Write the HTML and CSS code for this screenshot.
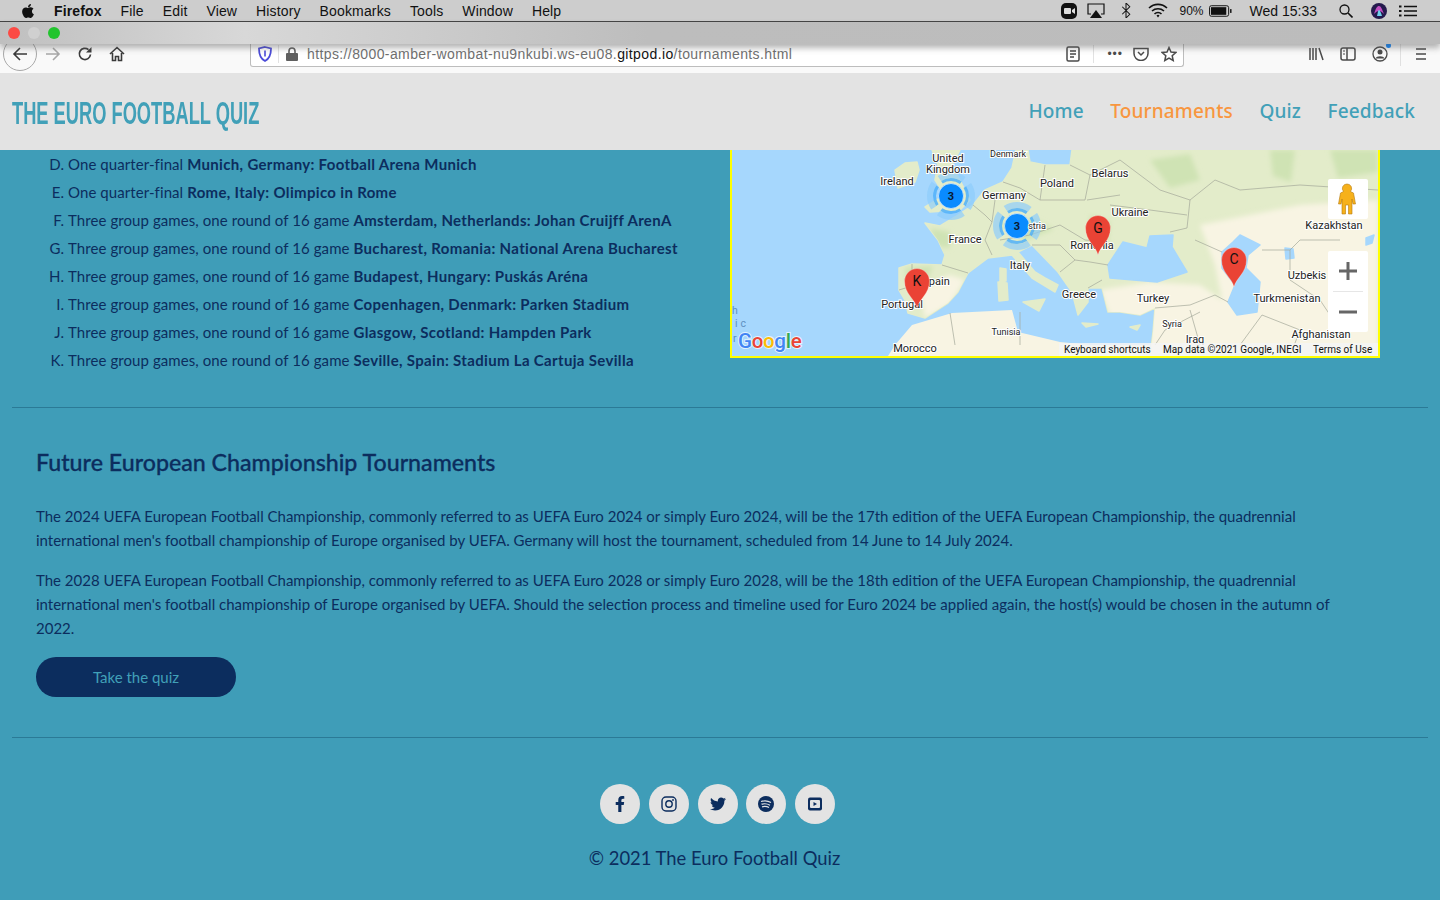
FILE: index.html
```html
<!DOCTYPE html>
<html lang="en">

<head>
    <meta charset="UTF-8" />
    <meta name="viewport" content="width=device-width, initial-scale=1.0" />
    <title>Tournaments - The Euro Football Quiz</title>
    <link rel="stylesheet" href="styles.css">
</head>

<body>
    <!-- mac menu bar -->
    <div class="menubar">
        <svg class="apple" viewBox="0 0 384 512"><path d="M318.7 268.7c-.2-36.7 16.4-64.4 50-84.8-18.8-26.9-47.2-41.7-84.7-44.6-35.5-2.8-74.3 20.7-88.5 20.7-15 0-49.4-19.7-76.4-19.7C63.3 141.2 4 184.8 4 273.5q0 39.3 14.4 81.2c12.8 36.7 59 126.7 107.2 125.2 25.2-.6 43-17.9 75.8-17.9 31.8 0 48.3 17.9 76.4 17.9 48.6-.7 90.4-82.5 102.6-119.3-65.2-30.7-61.7-90-61.7-91.9zm-56.6-164.2c27.3-32.4 24.8-61.9 24-72.5-24.1 1.4-52 16.4-67.9 34.9-17.5 19.8-27.8 44.3-25.6 71.9 26.1 2 49.9-11.4 69.5-34.3z"/></svg>
        <b class="app-name">Firefox</b>
        <span>File</span>
        <span>Edit</span>
        <span>View</span>
        <span>History</span>
        <span>Bookmarks</span>
        <span>Tools</span>
        <span>Window</span>
        <span>Help</span>
        <div class="menubar-right">
            <svg class="tray tray-zoom" viewBox="0 0 16 16"><rect width="16" height="16" rx="5" fill="#111"/><rect x="3" y="5" width="7" height="6" rx="1" fill="#ddd"/><path d="M11 7l3-2v6l-3-2z" fill="#ddd"/></svg>
            <svg class="tray tray-air" viewBox="0 0 18 16"><path d="M4 11H1V1h16v10h-3" fill="none" stroke="#111" stroke-width="1.2"/><path d="M9 7l6 8H3z" fill="#111"/></svg>
            <svg class="tray tray-bt" viewBox="0 0 10 16"><path d="M1 4l8 8-4 4V0l4 4-8 8" fill="none" stroke="#111" stroke-width="1.1"/></svg>
            <svg class="tray tray-wifi" viewBox="0 0 20 15"><path d="M1 5a13 13 0 0 1 18 0M4 8a9 9 0 0 1 12 0M6.5 11a5 5 0 0 1 7 0" fill="none" stroke="#111" stroke-width="1.6"/><path d="M8.5 12.500a2.200 2.200 0 0 1 3 0L10 14.500z" fill="#111"/></svg>
            <span class="tray-pct">90%</span>
            <svg class="tray tray-batt" viewBox="0 0 24 12"><rect x=".5" y=".5" width="20" height="11" rx="2" fill="none" stroke="#111"/><rect x="2" y="2" width="16" height="8" fill="#111"/><rect x="22" y="4" width="1.500" height="4" fill="#111"/></svg>
            <span class="tray-time">Wed 15:33</span>
            <svg class="tray tray-search" viewBox="0 0 14 14"><circle cx="5.500" cy="5.500" r="4.500" fill="none" stroke="#111" stroke-width="1.3"/><path d="M9 9l4.500 4.500" stroke="#111" stroke-width="1.600"/></svg>
            <svg class="tray tray-siri" viewBox="0 0 16 16"><circle cx="8" cy="8" r="8" fill="#241a4d"/><path d="M3 11c2-6 3-8 5-8s3 3 5 8c-2-2-3-3-5-3s-3 1-5 3z" fill="#c04fc0"/><path d="M6 13c1-4 1-6 2-6s2 3 3 6z" fill="#6fd0ee"/></svg>
            <svg class="tray tray-list" viewBox="0 0 18 12"><path d="M5 1.500h13M5 6h13M5 10.500h13" stroke="#111" stroke-width="1.400"/><path d="M0 1.500h2.500M0 6h2.500M0 10.500h2.500" stroke="#111" stroke-width="1.800"/></svg>
        </div>
    </div>

    <!-- window title bar -->
    <div class="titlebar">
        <span class="light light-red"></span>
        <span class="light light-off"></span>
        <span class="light light-green"></span>
    </div>

    <!-- firefox toolbar -->
    <div class="toolbar">
        <div class="nav-buttons">
            <span class="back-circle">
                <svg viewBox="0 0 16 16"><path d="M15 8H2M8 2L2 8l6 6" fill="none" stroke="#3a3a3a" stroke-width="1.600"/></svg>
            </span>
            <svg class="tool-icon forward" viewBox="0 0 16 16"><path d="M1 8h13M8 2l6 6-6 6" fill="none" stroke="#a8a8a8" stroke-width="1.600"/></svg>
            <svg class="tool-icon reload" viewBox="0 0 16 16"><path d="M13.500 8.500A5.600 5.600 0 1 1 11.500 3.600" fill="none" stroke="#3a3a3a" stroke-width="1.700"/><path d="M14.500 1v5.500H9z" fill="#3a3a3a"/></svg>
            <svg class="tool-icon home" viewBox="0 0 16 16"><path d="M1 8l7-6.500L15 8M3.500 7v7.500h3v-4h3v4h3V7" fill="none" stroke="#3a3a3a" stroke-width="1.600"/></svg>
        </div>
        <div class="urlbar">
            <svg class="shield" viewBox="0 0 14 16"><path d="M7 1l6 1.500c0 6-1 10-6 12.500C2 12.500 1 8.500 1 2.500z" fill="none" stroke="#4b4bd8" stroke-width="1.800"/><path d="M7 4.500v6" stroke="#4b4bd8" stroke-width="1.600"/></svg>
            <span class="url-sep"></span>
            <svg class="lock" viewBox="0 0 12 14"><rect x="0" y="6" width="12" height="8" rx="1" fill="#5f5f5f"/><path d="M3 6V4a3 3 0 0 1 6 0v2" fill="none" stroke="#5f5f5f" stroke-width="1.600"/></svg>
            <span class="url-text">https://8000-amber-wombat-nu9nkubi.ws-eu08.<em>gitpod.io</em>/tournaments.html</span>
            <svg class="url-icon reader" viewBox="0 0 14 16"><rect x="1" y="1" width="12" height="14" rx="1.500" fill="none" stroke="#4a4a4a" stroke-width="1.500"/><path d="M4 5h6M4 8h6M4 11h4" stroke="#4a4a4a" stroke-width="1.300"/></svg>
            <span class="url-sep url-sep-right"></span>
            <span class="url-dots">&bull;&bull;&bull;</span>
            <svg class="url-icon pocket" viewBox="0 0 16 14"><path d="M1 1.500h14v5a7 7 0 0 1-14 0z" fill="none" stroke="#4a4a4a" stroke-width="1.500"/><path d="M5 5l3 3 3-3" fill="none" stroke="#4a4a4a" stroke-width="1.500"/></svg>
            <svg class="url-icon star" viewBox="0 0 16 16"><path d="M8 1.500l2 4.500 4.800.500-3.600 3.200 1 4.800L8 12.100l-4.200 2.400 1-4.800L1.200 6.500 6 6z" fill="none" stroke="#4a4a4a" stroke-width="1.500"/></svg>
        </div>
        <div class="toolbar-right">
            <svg class="tool-icon library" viewBox="0 0 16 16"><path d="M2 2v12M5 2v12M8 2v12M11 2l4 12" fill="none" stroke="#4a4a4a" stroke-width="1.500"/></svg>
            <svg class="tool-icon sidebar" viewBox="0 0 16 16"><rect x="1" y="2" width="14" height="12" rx="2" fill="none" stroke="#4a4a4a" stroke-width="1.500"/><path d="M7 2v12" stroke="#4a4a4a" stroke-width="1.500"/><path d="M3 5h2M3 8h2" stroke="#4a4a4a"/></svg>
            <span class="account">
                <svg class="tool-icon" viewBox="0 0 16 16"><circle cx="8" cy="8" r="7" fill="none" stroke="#4a4a4a" stroke-width="1.300"/><circle cx="8" cy="6" r="2.500" fill="#4a4a4a"/><path d="M3.500 12.500c1-3 8-3 9 0z" fill="#4a4a4a"/></svg>
                <span class="account-dot"></span>
            </span>
            <span class="tool-sep"></span>
            <svg class="tool-icon menu" viewBox="0 0 16 16"><path d="M3 3h10M3 8h10M3 13h10" stroke="#4a4a4a" stroke-width="1.500"/></svg>
        </div>
    </div>

    <!-- the page itself -->
    <header class="site-header">
        <a class="logo">THE EURO FOOTBALL QUIZ</a>
        <nav class="site-nav">
            <a>Home</a>
            <a class="active">Tournaments</a>
            <a>Quiz</a>
            <a>Feedback</a>
        </nav>
    </header>

    <main class="content">
        <div class="hosts">
            <ol class="venues" start="4">
                <li>One quarter-final <b>Munich, Germany: Football Arena Munich</b></li>
                <li>One quarter-final <b>Rome, Italy: Olimpico in Rome</b></li>
                <li>Three group games, one round of 16 game <b>Amsterdam, Netherlands: Johan Cruijff ArenA</b></li>
                <li>Three group games, one round of 16 game <b>Bucharest, Romania: National Arena Bucharest</b></li>
                <li>Three group games, one round of 16 game <b>Budapest, Hungary: Puskás Aréna</b></li>
                <li>Three group games, one round of 16 game <b>Copenhagen, Denmark: Parken Stadium</b></li>
                <li>Three group games, one round of 16 game <b>Glasgow, Scotland: Hampden Park</b></li>
                <li>Three group games, one round of 16 game <b>Seville, Spain: Stadium La Cartuja Sevilla</b></li>
            </ol>

            <div class="map">
                <svg class="map-svg" viewBox="732 150 646 206">
                    <defs>
                        <filter id="soft"><feGaussianBlur stdDeviation="2.500"/></filter>
                        <clipPath id="eurasia"><path d="M899 290L899 268 912 264 942 265 945 255 938 240 925 223 940 226 955 217 973 205 985 190 1003 182 1012 168 1016 150 1028 150 1030 162 1045 165 1070 165 1072 150 1378 150 1378 356 1150 356 1153 332 1155 308 1140 315 1120 312 1108 312 1102 288 1088 288 1088 302 1078 315 1072 292 1058 272 1032 245 1018 252 1035 272 1045 278 1058 285 1055 292 1032 278 1012 255 988 258 968 273 958 292 948 303 925 318 908 313 905 300z"/></clipPath>
                    </defs>
                    <rect x="732" y="150" width="646" height="206" fill="#a6d7fd"/>
                    <!-- land -->
                    <path class="land" d="M899 290L899 268 912 264 942 265 945 255 938 240 925 223 940 226 955 217 973 205 985 190 1003 182 1012 168 1016 150 1028 150 1030 162 1045 165 1070 165 1072 150 1378 150 1378 356 1150 356 1153 332 1155 308 1140 315 1120 312 1108 312 1102 288 1088 288 1088 302 1078 315 1072 292 1058 272 1032 245 1018 252 1035 272 1045 278 1058 285 1055 292 1032 278 1012 255 988 258 968 273 958 292 948 303 925 318 908 313 905 300z"/>
                    <g clip-path="url(#eurasia)">
                        <path class="desert soft" d="M1100 290L1150 282 1200 285 1222 300 1378 290 1378 356 1150 356 1150 320 1110 316zM1200 225L1250 215 1300 205 1378 200 1378 290 1222 300 1215 265zM920 290L950 275 965 280 950 305 925 318z"/>
                        <path class="forest soft" d="M1270 150h25l-4 32-18-6zM1150 160l40-6 10 26-30 8zM1000 225l34-6 20 10-30 12zM1090 215l20 6-2 22-18-8zM930 228l20 4 0 16-14-2zM1330 150h48v22l-40 6zM905 268l28-2-6 14-20 2z"/>
                    </g>
                    <path class="land" d="M895 170L905 163 917 162 919 170 915 182 898 188zM932 150H960L952 165 965 190 970 200 960 210 930 212 925 207 945 195 935 180 938 165z"/>
                    <path class="land" d="M1000 268l6 1 0 12-6 1zM998 282l9 1 1 17-9 1zM1023 302l22-3-6 12zM1130 327l10-2-3 5zM1082 323l16 1-12 3z"/>
                    <path class="desert" d="M888 356L895 345 912 325 952 313 1012 310 1018 332 1060 342 1090 345 1150 345 1150 356z"/>
                    <!-- seas -->
                    <path class="sea" d="M1108 265L1123 242 1147 248 1150 236 1173 235 1172 247 1187 272 1157 282 1110 278z"/>
                    <path class="sea" d="M1240 235L1260 245 1248 255 1246 268 1260 282 1257 312 1237 315 1228 302 1235 285 1222 268 1222 252 1233 242z"/>
                    <path class="sea" d="M1285 248l8 1 1 9-8 1zM1366 238l8-3-2 8-6 2z"/>
                    <!-- borders -->
                    <path class="borders" d="M942 265L968 273M899 290L912 286 912 264M973 205L985 215 992 222 985 240 992 255M985 190L995 200 992 222M1003 182L1020 188 1040 200 1045 165M1040 200L1085 200 1090 175 1070 165M1000 240L1030 235 1060 225 1085 240 1108 242M1032 245L1060 245 1075 260 1090 262 1108 265M1075 260L1060 272M1090 175L1120 160 1160 190 1190 200 1187 228 1170 232M1120 195L1087 200M1110 205L1150 210 1187 215M1088 288L1102 280M1155 308L1190 305 1215 295 1228 302M1190 200L1215 180 1240 190 1300 185 1378 190M1222 252L1195 240M1262 250L1290 250 1300 240 1340 240M1290 250L1290 280 1320 300 1340 330M1200 312L1165 330 1155 345M1190 310L1200 345M1020 312L1020 345M950 313L955 345M1262 315L1300 330 1290 356M1262 315L1240 345"/>
                    <!-- marker clusters -->
                    <g class="cluster"><circle class="halo" cx="951" cy="196" r="21"/><circle class="ring" cx="951" cy="196" r="16.500"/><circle class="dot" cx="951" cy="196" r="12.500"/><text x="951" y="200">3</text></g>
                    <g class="cluster"><circle class="halo" cx="1017" cy="226" r="21"/><circle class="ring" cx="1017" cy="226" r="16.500"/><circle class="dot" cx="1017" cy="226" r="12.500"/><text x="1017" y="230">3</text></g>
                    <!-- labels -->
                    <g class="labels">
                        <text class="small" x="1008" y="157">Denmark</text>
                        <text x="948" y="162">United</text>
                        <text x="948" y="173">Kingdom</text>
                        <text x="897" y="185">Ireland</text>
                        <text x="1057" y="187">Poland</text>
                        <text x="1110" y="177">Belarus</text>
                        <text x="1004" y="199">Germany</text>
                        <text x="1130" y="216">Ukraine</text>
                        <text x="1334" y="229">Kazakhstan</text>
                        <text class="small" x="1037" y="229">stria</text>
                        <text x="965" y="243">France</text>
                        <text x="1092" y="249">Romania</text>
                        <text x="1020" y="269">Italy</text>
                        <text x="936" y="285">Spain</text>
                        <text x="1307" y="279">Uzbekis</text>
                        <text x="1079" y="298">Greece</text>
                        <text x="1153" y="302">Turkey</text>
                        <text x="1287" y="302">Turkmenistan</text>
                        <text x="902" y="308">Portugal</text>
                        <text class="small" x="1172" y="327">Syria</text>
                        <text class="small" x="1006" y="335">Tunisia</text>
                        <text x="1321" y="338">Afghanistan</text>
                        <text x="1195" y="343">Iraq</text>
                        <text x="915" y="352">Morocco</text>
                    </g>
                    <text class="ocean" x="732" y="314">h</text>
                    <text class="ocean" x="735" y="327">ic</text>
                    <text class="ocean ocean-tight" x="733" y="342">r</text>
                    <!-- pins -->
                    <g class="pin"><path d="M917 308c-2-9-12.500-14-12.500-27a12.500 12.500 0 0 1 25 0c0 13-10.500 18-12.500 27z"/><text x="917" y="286">K</text></g>
                    <g class="pin"><path d="M1098 255c-2-9-12.500-14-12.500-27a12.500 12.500 0 0 1 25 0c0 13-10.500 18-12.500 27z"/><text x="1098" y="233">G</text></g>
                    <g class="pin"><path d="M1234 287c-2-9-12.500-14-12.500-27a12.500 12.500 0 0 1 25 0c0 13-10.500 18-12.500 27z"/><text x="1234" y="264">C</text></g>
                    <!-- google logo and attribution -->
                    <text class="google" x="738" y="348"><tspan fill="#4285f4">G</tspan><tspan fill="#ea4335">o</tspan><tspan fill="#fbbc05">o</tspan><tspan fill="#4285f4">g</tspan><tspan fill="#34a853">l</tspan><tspan fill="#ea4335">e</tspan></text>
                    <rect x="1059" y="343" width="319" height="13" fill="#f5f5f5" fill-opacity=".85"/>
                    <text class="attrib" x="1064" y="353">Keyboard shortcuts</text>
                    <text class="attrib" x="1163" y="353">Map data ©2021 Google, INEGI</text>
                    <text class="attrib" x="1313" y="353">Terms of Use</text>
                    <!-- street view and zoom controls -->
                    <rect x="1328" y="179" width="40" height="40" rx="2" fill="#fff"/>
                    <path d="M1347 184a4.500 4.500 0 0 1 3.500 7.500l3 1.500 2 11h-2.500l-1-5v15h-3.500v-9h-3v9h-3.500v-15l-1 5h-2.500l2-11 3-1.500a4.500 4.500 0 0 1 3.500-7.500z" fill="#f6b11b" stroke="#b57a10" stroke-width=".6"/>
                    <rect x="1328" y="251" width="40" height="81" rx="2" fill="#fff"/>
                    <rect x="1333" y="291" width="30" height="1" fill="#e6e6e6"/>
                    <path d="M1339 269.500h18v3h-18zM1346.500 262h3v18h-3zM1339 310.500h18v3h-18z" fill="#666"/>
                </svg>
            </div>
        </div>

        <section class="future">
            <h2>Future European Championship Tournaments</h2>
            <p>The 2024 UEFA European Football Championship, commonly referred to as UEFA Euro 2024 or simply Euro 2024, will be the 17th edition of the UEFA European Championship, the quadrennial international men's football championship of Europe organised by UEFA. Germany will host the tournament, scheduled from 14 June to 14 July 2024.</p>
            <p>The 2028 UEFA European Football Championship, commonly referred to as UEFA Euro 2028 or simply Euro 2028, will be the 18th edition of the UEFA European Championship, the quadrennial international men's football championship of Europe organised by UEFA. Should the selection process and timeline used for Euro 2024 be applied again, the host(s) would be chosen in the autumn of 2022.</p>
            <a class="quiz-button">Take the quiz</a>
        </section>

        <footer class="site-footer">
            <div class="socials">
                <a class="social"><svg viewBox="0 0 320 512"><path d="M279.140 288l14.220-92.660h-88.910v-60.130c0-25.350 12.420-50.060 52.240-50.060h40.420V6.260S260.430 0 225.360 0c-73.220 0-121.080 44.380-121.080 124.720v70.620H22.890V288h81.390v224h100.170V288z"/></svg></a>
                <a class="social"><svg viewBox="0 0 16 16"><rect x="1" y="1" width="14" height="14" rx="4" fill="none" stroke="#0c2d5e" stroke-width="1.400"/><circle cx="8" cy="8" r="3.200" fill="none" stroke="#0c2d5e" stroke-width="1.400"/><circle cx="12" cy="4" r=".9"/></svg></a>
                <a class="social"><svg viewBox="0 0 512 512"><path d="M459.370 151.716c.325 4.548.325 9.097.325 13.645 0 138.720-105.583 298.558-298.558 298.558-59.452 0-114.680-17.219-161.137-47.106 8.447.974 16.568 1.299 25.340 1.299 49.055 0 94.213-16.568 130.274-44.832-46.132-.975-84.792-31.188-98.112-72.772 6.498.974 12.995 1.624 19.818 1.624 9.421 0 18.843-1.300 27.614-3.573-48.081-9.747-84.143-51.980-84.143-102.985v-1.299c13.969 7.797 30.214 12.670 47.431 13.319-28.264-18.843-46.781-51.005-46.781-87.391 0-19.492 5.197-37.360 14.294-52.954 51.655 63.675 129.300 105.258 216.365 109.807-1.624-7.797-2.599-15.918-2.599-24.040 0-57.828 46.782-104.934 104.934-104.934 30.213 0 57.502 12.670 76.670 33.137 23.715-4.548 46.456-13.320 66.599-25.340-7.798 24.366-24.366 44.833-46.132 57.827 21.117-2.273 41.584-8.122 60.426-16.243-14.292 20.791-32.161 39.308-52.628 54.253z"/></svg></a>
                <a class="social"><svg viewBox="0 0 16 16"><circle cx="8" cy="8" r="8"/><path d="M3 5.500c3.500-1 7-.7 10 1M3.500 8.200c3-.8 6-.5 8.500 1M4 10.800c2.500-.6 5-.4 7 .8" fill="none" stroke="#e3e3e3" stroke-width="1.200"/></svg></a>
                <a class="social"><svg viewBox="0 0 16 16"><rect x="1" y="1.500" width="14" height="13" rx="2"/><rect x="3" y="4" width="10" height="8" rx="1" fill="#e3e3e3"/><path d="M6.500 6v4l3.500-2z"/></svg></a>
            </div>
            <p class="copyright">© 2021 The Euro Football Quiz</p>
        </footer>
    </main>
</body>

</html>
```

FILE: styles.css
```css
body {
    margin: 0;
    height: 900px;
    overflow: hidden;
    background-color: #3f9db8;
    font-family: "Lato", sans-serif;
    color: #0c2d5e;
}

/* mac menu bar */
.menubar {
    height: 21px;
    background-color: #cdcdcd;
    border-bottom: 1px solid #444;
    display: flex;
    align-items: center;
    gap: 18.95px;
    padding-left: 21px;
    font-family: "Liberation Sans", sans-serif;
    font-size: 14px;
    letter-spacing: 0.15px;
    color: #111;
}

.apple {
    width: 14px;
    height: 16px;
    fill: #111;
}

.menubar-right {
    margin-left: auto;
    display: flex;
    align-items: center;
    padding-right: 23px;
}

.tray {
    display: block;
}

.tray-zoom { width: 16px; height: 16px; }
.tray-air { width: 18px; height: 16px; margin-left: 10px; }
.tray-bt { width: 10px; height: 15px; margin-left: 16px; }
.tray-wifi { width: 20px; height: 15px; margin-left: 17px; }
.tray-pct { font-size: 12px; margin-left: 12px; letter-spacing: 0; }
.tray-batt { width: 23px; height: 12px; margin-left: 5px; }
.tray-time { margin-left: 18px; letter-spacing: 0; }
.tray-search { width: 14px; height: 14px; margin-left: 22px; }
.tray-siri { width: 16px; height: 16px; margin-left: 18px; }
.tray-list { width: 18px; height: 12px; margin-left: 12px; }

/* window title bar */
.titlebar {
    height: 22px;
    background: linear-gradient(90deg, #bfbfbf 0%, #d8d8d8 17%, #bdbdbd 45%, #bcbcbc 100%);
    display: flex;
    align-items: center;
    gap: 8px;
    padding-left: 8px;
    position: relative;
    z-index: 1;
    box-shadow: 0 4px 6px rgba(90, 90, 90, 0.45);
}

.light {
    width: 12px;
    height: 12px;
    border-radius: 50%;
}

.light-red { background-color: #fc4a44; }
.light-off { background-color: #d0d0d0; }
.light-green { background-color: #22c42e; }

/* firefox toolbar */
.toolbar {
    height: 29px;
    background-color: #f9f9f9;
    display: flex;
    overflow: hidden;
}

.nav-buttons {
    width: 250px;
    height: 19px;
    display: flex;
    align-items: center;
    padding-left: 3px;
    box-sizing: border-box;
}

.back-circle {
    width: 32px;
    height: 32px;
    border: 1px solid #a8a8a8;
    border-radius: 50%;
    background-color: #f9f9f9;
    display: flex;
    align-items: center;
    justify-content: center;
    flex: none;
}

.back-circle svg {
    width: 16px;
    height: 16px;
}

.tool-icon {
    width: 16px;
    height: 16px;
    display: block;
    flex: none;
}

.forward { margin-left: 8px; }
.reload { margin-left: 16px; }
.home { margin-left: 16px; }

.urlbar {
    width: 934px;
    height: 23px;
    box-sizing: border-box;
    background-color: #fff;
    border: 1px solid #bdbdbd;
    border-top: 0;
    border-radius: 0 0 3px 3px;
    display: flex;
    align-items: center;
    padding: 0 6px 2px 7px;
}

.shield {
    width: 14px;
    height: 16px;
}

.url-sep {
    width: 1px;
    height: 18px;
    background-color: #e2e2e2;
    margin-left: 6px;
}

.lock {
    width: 12px;
    height: 14px;
    margin-left: 7px;
}

.url-text {
    margin-left: 9px;
    font-family: "Liberation Sans", sans-serif;
    font-size: 14px;
    letter-spacing: 0.39px;
    color: #6f6f6f;
}

.url-text em {
    font-style: normal;
    color: #111;
}

.url-icon {
    display: block;
}

.reader {
    width: 14px;
    height: 16px;
    margin-left: auto;
}

.url-sep-right {
    margin-left: 13px;
}

.url-dots {
    font-size: 12px;
    letter-spacing: 1px;
    color: #4a4a4a;
    margin-left: 13px;
    font-family: "Liberation Sans", sans-serif;
}

.pocket {
    width: 16px;
    height: 14px;
    margin-left: 10px;
}

.star {
    width: 16px;
    height: 16px;
    margin-left: 12px;
}

.toolbar-right {
    flex: 1;
    height: 19px;
    display: flex;
    align-items: center;
    gap: 16px;
    padding-left: 124px;
}

.account {
    position: relative;
    display: block;
}

.account-dot {
    position: absolute;
    top: -3px;
    right: -3px;
    width: 5px;
    height: 5px;
    border-radius: 50%;
    background-color: #0a84ff;
}

.tool-sep {
    width: 1px;
    height: 24px;
    background-color: #e0e0e0;
    margin-left: -4px;
    margin-right: -4px;
}

/* site header */
.site-header {
    height: 77px;
    background-color: #e3e3e3;
    display: flex;
    align-items: center;
    justify-content: space-between;
    padding: 0 25px 0 12px;
    position: relative;
    z-index: 2;
}

.logo {
    display: block;
    margin-top: 4px;
    font-family: "Liberation Sans", sans-serif;
    font-weight: bold;
    font-size: 32px;
    color: #41a0b8;
    transform: scaleX(0.571);
    transform-origin: left center;
}

.site-nav {
    display: flex;
    gap: 26.5px;
    margin-bottom: 1px;
    font-family: "Noto Sans", sans-serif;
    font-size: 19px;
    font-weight: 500;
    letter-spacing: 0.15px;
}

.site-nav a {
    color: #41a0b8;
}

.site-nav a.active {
    color: #f8963f;
}

/* page content */
.content {
    padding: 0 12px;
}

.hosts {
    display: flex;
    justify-content: space-between;
    padding-right: 48px;
    padding-bottom: 32px;
    border-bottom: 1px solid #2b7a96;
}

.venues {
    margin: 0;
    padding: 0 0 0 56px;
    list-style-type: upper-alpha;
    font-size: 15px;
    line-height: 28px;
    letter-spacing: 0.08px;
    height: 225px;
}

.venues b {
    font-weight: bold;
    letter-spacing: 0.33px;
}

.map {
    width: 650px;
    height: 208px;
    box-sizing: border-box;
    border: 2px solid #ffff00;
    border-top: 0;
    flex: none;
}

.map-svg {
    display: block;
    width: 646px;
    height: 206px;
    font-family: "Roboto", sans-serif;
}

.land {
    fill: #e3ecca;
    stroke: #e3ecca;
    stroke-width: 1.5;
    stroke-linejoin: round;
}

.desert { fill: #f8f4e3; }
.forest { fill: #cfe3b4; }
.soft { filter: url(#soft); }

.sea {
    fill: #a6d7fd;
    stroke: #a6d7fd;
    stroke-width: 1.5;
    stroke-linejoin: round;
}

.borders {
    fill: none;
    stroke: #a3a89a;
    stroke-width: 0.7;
}

.cluster .halo {
    fill: none;
    stroke: #8fcdfb;
    stroke-width: 6;
    stroke-opacity: 0.7;
    stroke-dasharray: 26 7;
    stroke-dashoffset: 13;
}

.cluster .ring {
    fill: none;
    stroke: #4fb0fa;
    stroke-width: 3;
    stroke-opacity: 0.85;
    stroke-dasharray: 20 5.9;
    stroke-dashoffset: 10;
}

.cluster .dot {
    fill: #0a8bff;
    stroke: #cfe8ff;
    stroke-width: 0.8;
}

.cluster text {
    font-size: 11px;
    font-weight: bold;
    text-anchor: middle;
    fill: #0a1a30;
}

.labels text {
    font-size: 11px;
    text-anchor: middle;
    fill: #222;
    stroke: #fff;
    stroke-width: 2px;
    paint-order: stroke;
}

.labels .small {
    font-size: 9px;
}

.ocean {
    font-size: 10.5px;
    letter-spacing: 3px;
    fill: #5d8fc0;
}

.ocean-tight {
    letter-spacing: 0;
}

.pin path {
    fill: #ea4335;
    stroke: #fff;
    stroke-opacity: 0.5;
    stroke-width: 0.6;
}

.pin text {
    font-size: 14px;
    text-anchor: middle;
    fill: #111;
}

.google {
    font-size: 20.5px;
    font-weight: 500;
    letter-spacing: -0.3px;
    stroke: #fff;
    stroke-width: 2px;
    stroke-opacity: 0.7;
    paint-order: stroke;
}

.attrib {
    font-size: 10px;
    fill: #111;
}

/* future tournaments */
.future {
    padding: 36px 24px 40px;
    border-bottom: 1px solid #2b7a96;
}

.future h2 {
    margin: 0 0 24px;
    font-size: 23.2px;
    line-height: 36px;
    font-weight: 500;
    -webkit-text-stroke: 0.3px #0c2d5e;
}

.future p {
    margin: 0 0 16px;
    max-width: 1320px;
    font-size: 15px;
    line-height: 24px;
}

.quiz-button {
    display: block;
    width: 200px;
    height: 40px;
    margin-top: 17px;
    border-radius: 20px;
    background-color: #0c2d5e;
    color: #41a0b8;
    text-align: center;
    font-size: 15px;
    line-height: 40px;
}

/* footer */
.site-footer {
    padding-top: 46px;
}

.socials {
    display: flex;
    justify-content: center;
    gap: 8.75px;
    padding-right: 5px;
}

.social {
    width: 40px;
    height: 40px;
    border-radius: 50%;
    background-color: #e3e3e3;
    display: flex;
    align-items: center;
    justify-content: center;
}

.social svg {
    height: 16px;
    width: 16px;
    fill: #0c2d5e;
}

.copyright {
    margin: 19px 0 0;
    padding-right: 11px;
    text-align: center;
    font-size: 18.4px;
    line-height: 30px;
}
```
